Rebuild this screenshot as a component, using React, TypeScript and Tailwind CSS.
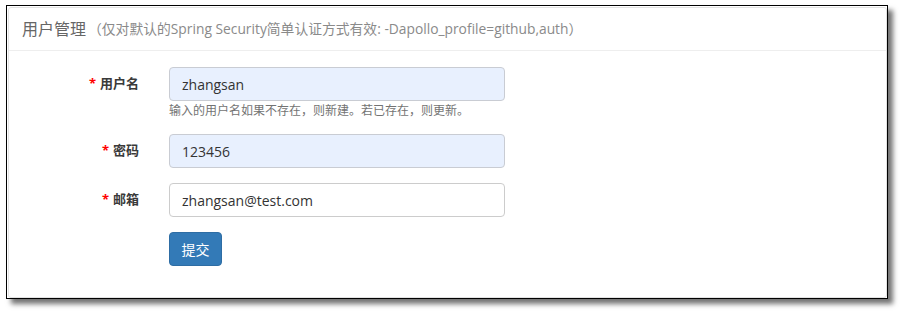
import React from 'react';

const font = { fontFamily: '"Open Sans", "Noto Sans CJK SC", sans-serif' };

interface FieldProps {
  label: string;
  value: string;
  autofill?: boolean;
  help?: string;
}

const Field: React.FC<FieldProps> = ({ label, value, autofill, help }) => {
  return (
    <div className="flex">
      <label className="w-[130px] shrink-0 pt-[6px] text-right text-[13px] leading-[20px] font-bold text-[#3a3a3a]">
        <span className="text-[#ff0000] mr-[4px]">*</span>
        {label}
      </label>
      <div className="ml-[30px] w-[336px]">
        <div
          className={`h-[34px] flex items-center px-[12px] rounded-[4px] border text-[14px] text-[#333] ${
            autofill ? 'bg-[#e8f0fe] border-[#c9ccd3]' : 'bg-white border-[#ccc]'
          }`}
        >
          {value}
        </div>
        {help && (
          <div className="mt-[1px] text-[12px] leading-[17px] text-[#737373]">{help}</div>
        )}
      </div>
    </div>
  );
};

export default function App() {
  return (
    <div className="w-[900px] h-[311px] bg-white" style={font}>
      <div className="ml-[6px] mt-[5px] w-[882px] h-[294px] border border-black bg-white pl-px pt-px shadow-[5px_5px_5px_rgba(0,0,0,0.55)]">
        <div className="h-[291px] border border-[#e3e3e3] rounded-[3px] bg-white">
          <div className="h-[43px] flex items-center pl-[13px] border-b border-[#eee]">
            <span className="text-[16px] text-[#666]">用户管理</span>
            <span className="ml-[2px] text-[13.8px] text-[#8a8a8a]">
              （仅对默认的Spring Security简单认证方式有效: -Dapollo_profile=github,auth）
            </span>
          </div>
          <div className="pt-[16px] flex flex-col gap-[15px]">
            <Field
              label="用户名"
              value="zhangsan"
              autofill
              help="输入的用户名如果不存在，则新建。若已存在，则更新。"
            />
            <Field label="密码" value="123456" autofill />
            <Field label="邮箱" value="zhangsan@test.com" />
            <div className="flex">
              <div className="w-[130px] shrink-0" />
              <button className="ml-[30px] h-[34px] w-[53px] rounded-[4px] border border-[#2e6da4] bg-[#337ab7] text-[14px] text-white">
                提交
              </button>
            </div>
          </div>
        </div>
      </div>
    </div>
  );
}
